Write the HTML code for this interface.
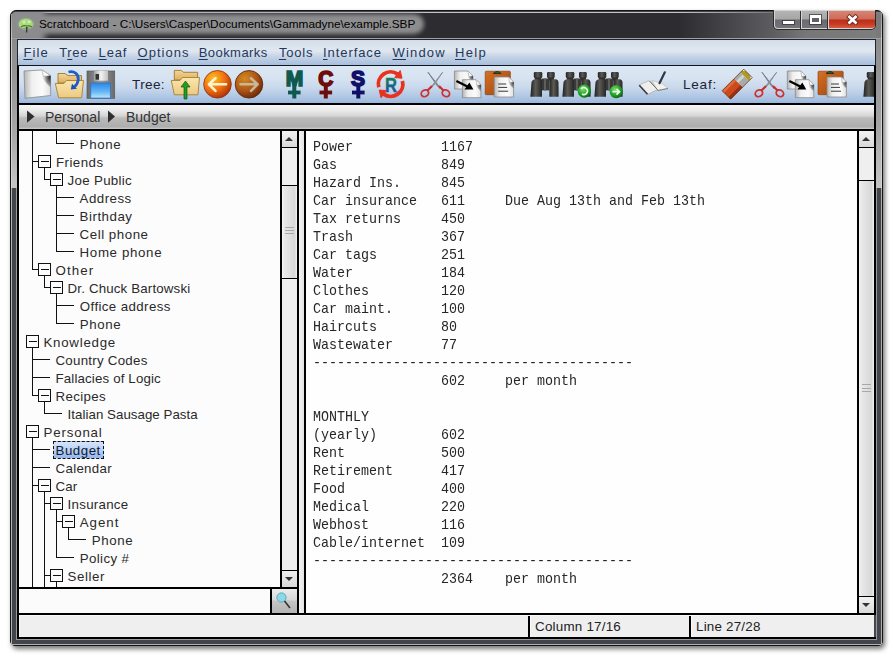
<!DOCTYPE html>
<html><head><meta charset="utf-8"><style>
*{box-sizing:border-box}
html,body{margin:0;padding:0}
body{width:894px;height:657px;background:#fff;position:relative;overflow:hidden;font-family:"Liberation Sans",sans-serif}
.a{position:absolute}
#shadow{left:8px;top:8px;width:881px;height:646px;border-radius:8px;box-shadow:2px 4px 7px rgba(0,0,0,.45)}
#win{left:10px;top:10px;width:873px;height:636px;background:#42454b;border:1px solid #141414;border-radius:6px 6px 5px 5px;overflow:hidden;box-shadow:2px 3px 5px rgba(0,0,0,.55)}
#inner-light{left:0;top:0;right:0;bottom:0;border:1px solid #b4b4b4;border-radius:6px 6px 4px 4px}
#title{left:1px;top:1px;width:869px;height:27px;background:#2d2d31;border-top:1px solid #c4c4c4;border-left:1px solid #b8b8b8;border-radius:5px 5px 0 0}
#sideL{left:1px;top:27px;width:5px;height:150px;background:linear-gradient(#8a8a8a,#a8a8a8 70%,#b8b8b8)}
#sideR{left:866px;top:27px;width:5px;height:150px;background:linear-gradient(#8a8a8a,#a8a8a8 70%,#b8b8b8)}
#menu{left:17px;top:39px;width:859px;height:27px;border-top:1px solid #1e2430;border-bottom:1px solid #10151f;border-left:1px solid #1e2430;border-right:1px solid #1e2430;
 background:linear-gradient(#d3dde9 0px,#dfe6ef 9px,#e1e7f0 11px,#c8d5e6 16px,#a6bedd 25px)}
#menu span{position:absolute;top:5px;font-size:13px;color:#1e395b}
#menu u{text-decoration:underline;text-decoration-thickness:1px;text-underline-offset:2px;text-decoration-skip-ink:none}
#tool{left:17px;top:66px;width:859px;height:37px;border-left:2px solid #000;border-right:2px solid #000;
 background:linear-gradient(#dce7f4 0px,#d8e3f1 12px,#c8d8ec 22px,#a6c0e0 34px,#9ab6dc 37px)}
#bc{left:17px;top:103px;width:859px;height:28px;border-top:2px solid #000;border-bottom:2px solid #000;border-left:2px solid #000;border-right:2px solid #000;
 background:linear-gradient(#f6f6f6 0px,#ececec 5px,#d4d4d4 11px,#bababa 13px,#adadad 22px,#d0d0d0 24px)}
.lbl{position:absolute;font-size:13.6px;color:#1c2438}
.blk{position:absolute;background:#000}
#treebg{left:19px;top:131px;width:261px;height:456px;background:#fcfcfc;overflow:hidden}
.sbtrack{position:absolute;background:#efefef}
.sbbtn{position:absolute;background:linear-gradient(#f2f2f2,#d9d9d9)}
.thumb{position:absolute;background:linear-gradient(90deg,#f6f6f6 0px,#e9e9e9 2px,#d6d6d6 13px,#ececec 14px)}
.grip{position:absolute;height:1px;width:9px;background:#a8a8a8}
.tri-up{position:absolute;width:0;height:0;border-left:4px solid transparent;border-right:4px solid transparent;border-bottom:4px solid #333}
.tri-dn{position:absolute;width:0;height:0;border-left:4px solid transparent;border-right:4px solid transparent;border-top:4px solid #333}
#editor{left:306px;top:131px;width:551px;height:482px;background:#fefefe;overflow:hidden}
#status{left:19px;top:615px;width:855px;height:22px;background:#efefef}
.st{position:absolute;font-size:13.4px;color:#222;top:4px}
.tl{position:absolute;background:#111}
.tt{position:absolute;font-size:13.3px;color:#2a2a2a;white-space:nowrap}
.box{position:absolute;width:13px;height:13px;border:1px solid #111;background:#fcfcfc}
.box::after{content:"";position:absolute;left:2px;top:5px;width:8px;height:1px;background:#111}
#ed pre{margin:0}
.ln{position:absolute;left:7px;font-family:"Liberation Mono",monospace;font-size:13.33px;color:#262626;white-space:pre;transform:scaleY(1.08);transform-origin:0 70%}
</style></head><body>
<div class="a" id="win"><div class="a" id="title"></div><div class="a" id="sideL"></div><div class="a" id="sideR"></div></div>
<div class="a" id="menu"><span style="left:5.4px;letter-spacing:1.1px"><u>F</u>ile</span><span style="left:41.3px;letter-spacing:0.6px">T<u>r</u>ee</span><span style="left:80.6px;letter-spacing:0.8px"><u>L</u>eaf</span><span style="left:119.5px;letter-spacing:1.05px"><u>O</u>ptions</span><span style="left:180.7px;letter-spacing:0.45px"><u>B</u>ookmarks</span><span style="left:260.9px;letter-spacing:0.8px"><u>T</u>ools</span><span style="left:305px;letter-spacing:0.92px"><u>I</u>nterface</span><span style="left:374.5px;letter-spacing:1.18px"><u>W</u>indow</span><span style="left:437px;letter-spacing:1.37px"><u>H</u>elp</span></div>
<div class="a" id="tool"><span class="lbl" style="left:113px;top:11px;letter-spacing:.35px">Tree:</span><span class="lbl" style="left:664px;top:11px;letter-spacing:.75px">Leaf:</span></div>
<div class="a" id="bc"></div>
<div class="a" style="left:11px;top:12px;width:865px;height:26px;overflow:hidden;border-radius:5px 0 0 0"><div class="a" style="left:-8px;top:1.8px;width:421px;height:20.5px;background:#8e8e90;border-radius:10px;filter:blur(2.2px)"></div><div class="a" style="left:-6px;top:-6px;width:40px;height:38px;background:#8c8c8e;filter:blur(3px)"></div></div>
<div class="a" style="left:680px;top:12px;width:202px;height:26px;background:linear-gradient(90deg,rgba(104,104,108,0),rgba(104,104,108,.8) 45%,#767678 62%,#7e7e7e)"></div>
<div class="a" style="left:39px;top:17px;font-size:11.8px;color:#000;white-space:nowrap">Scratchboard - C:\Users\Casper\Documents\Gammadyne\example.SBP</div>
<div class="a" style="left:773px;top:10px;width:103px;height:20px;background:#2a2a2a;border-radius:0 0 5px 5px"></div>
<div class="a" style="left:774px;top:10px;width:101px;height:19px;background:#d4d4d4;border-radius:0 0 4px 4px"></div>
<div class="a" style="left:775px;top:11px;width:25px;height:17px;border-radius:0 0 0 3px;background:linear-gradient(#b4b4b4,#a6a6a6 8px,#6a6a70 9px,#74747a)"></div>
<div class="a" style="left:800px;top:11px;width:1px;height:18px;background:#303030"></div>
<div class="a" style="left:802px;top:11px;width:25px;height:17px;background:linear-gradient(#b4b4b4,#a6a6a6 8px,#6a6a70 9px,#74747a)"></div>
<div class="a" style="left:827px;top:11px;width:1px;height:18px;background:#303030"></div>
<div class="a" style="left:829px;top:11px;width:46px;height:17px;border-radius:0 0 3px 0;background:linear-gradient(#d88474,#d06a58 8px,#b8301a 9px,#c83a22 13px,#d85a40)"></div>
<div class="a" style="left:783px;top:21px;width:11px;height:3px;background:#fff;outline:1px solid rgba(50,50,50,.7)"></div>
<div class="a" style="left:810px;top:15px;width:11px;height:9px;border:2px solid #fff;border-top-width:3px;background:#606066;outline:1px solid rgba(50,50,50,.7)"></div>
<svg class="a" style="left:846px;top:14px" width="13" height="11"><path d="M3.5 3L9.5 8.5M9.5 3L3.5 8.5" stroke="#6a2a20" stroke-width="4.6" stroke-linecap="square"/><path d="M3.5 3L9.5 8.5M9.5 3L3.5 8.5" stroke="#fff" stroke-width="2.8" stroke-linecap="square"/></svg>
<div class="a" style="left:876px;top:14px;width:6px;height:24px;background:#7a7a7a"></div>
<div class="a" style="left:11px;top:38px;width:871px;height:1px;background:#a0a0a0"></div>
<div class="a" style="left:11px;top:39px;width:6px;height:149px;background:linear-gradient(#8a8a8a,#a6a6a6 60%,#c4c4c4)"></div>
<div class="a" style="left:876px;top:39px;width:6px;height:149px;background:linear-gradient(#8a8a8a,#a6a6a6 60%,#c4c4c4)"></div>
<div class="a" style="left:11px;top:14px;width:1px;height:174px;background:linear-gradient(#9a9a9a,#c8c8c8 15%,#d4d4d4)"></div>
<div class="a" style="left:881px;top:14px;width:1px;height:174px;background:linear-gradient(#9a9a9a,#c8c8c8 15%,#d4d4d4)"></div>
<div class="a" style="left:11px;top:188px;width:1px;height:456px;background:#b0b0b0"></div>
<div class="a" style="left:16px;top:188px;width:1px;height:451px;background:#9a9a9a"></div>
<div class="a" style="left:876px;top:188px;width:1px;height:451px;background:#9a9a9a"></div>
<div class="a" style="left:881px;top:188px;width:1px;height:456px;background:#b0b0b0"></div>
<div class="a" style="left:16px;top:639px;width:861px;height:1px;background:#9a9a9a"></div>
<div class="a" style="left:12px;top:644px;width:869px;height:1px;background:#b0b0b0"></div>
<div class="a" style="left:45px;top:109px;font-size:14px;color:#333;white-space:nowrap">Personal</div>
<div class="a" style="left:126px;top:109px;font-size:14px;color:#333;white-space:nowrap">Budget</div>
<div class="a" id="treebg">
<div class="tl" style="left:13px;top:0px;width:1px;height:139px"></div>
<div class="tl" style="left:37px;top:0px;width:1px;height:13px"></div>
<div class="tl" style="left:25px;top:37px;width:1px;height:12px"></div>
<div class="tl" style="left:37px;top:55px;width:1px;height:66px"></div>
<div class="tl" style="left:25px;top:145px;width:1px;height:12px"></div>
<div class="tl" style="left:37px;top:163px;width:1px;height:30px"></div>
<div class="tl" style="left:13px;top:217px;width:1px;height:48px"></div>
<div class="tl" style="left:25px;top:271px;width:1px;height:12px"></div>
<div class="tl" style="left:13px;top:307px;width:1px;height:150px"></div>
<div class="tl" style="left:25px;top:361px;width:1px;height:96px"></div>
<div class="tl" style="left:37px;top:379px;width:1px;height:48px"></div>
<div class="tl" style="left:49px;top:397px;width:1px;height:12px"></div>
<div class="tl" style="left:37px;top:451px;width:1px;height:6px"></div>
<div class="tl" style="left:37px;top:12px;width:18px;height:1px"></div>
<div class="tt" style="left:60.80px;top:6px;letter-spacing:0.575px">Phone</div>
<div class="tl" style="left:13px;top:30px;width:6px;height:1px"></div>
<div class="box" style="left:19px;top:24px"></div>
<div class="tt" style="left:37.00px;top:24px;letter-spacing:0.450px">Friends</div>
<div class="tl" style="left:25px;top:48px;width:6px;height:1px"></div>
<div class="box" style="left:31px;top:42px"></div>
<div class="tt" style="left:48.60px;top:42px;letter-spacing:0.311px">Joe Public</div>
<div class="tl" style="left:37px;top:66px;width:18px;height:1px"></div>
<div class="tt" style="left:60.60px;top:60px;letter-spacing:0.483px">Address</div>
<div class="tl" style="left:37px;top:84px;width:18px;height:1px"></div>
<div class="tt" style="left:60.60px;top:78px;letter-spacing:0.514px">Birthday</div>
<div class="tl" style="left:37px;top:102px;width:18px;height:1px"></div>
<div class="tt" style="left:60.60px;top:96px;letter-spacing:0.533px">Cell phone</div>
<div class="tl" style="left:37px;top:120px;width:18px;height:1px"></div>
<div class="tt" style="left:60.60px;top:114px;letter-spacing:0.644px">Home phone</div>
<div class="tl" style="left:13px;top:138px;width:6px;height:1px"></div>
<div class="box" style="left:19px;top:132px"></div>
<div class="tt" style="left:36.50px;top:132px;letter-spacing:1.100px">Other</div>
<div class="tl" style="left:25px;top:156px;width:6px;height:1px"></div>
<div class="box" style="left:31px;top:150px"></div>
<div class="tt" style="left:48.60px;top:150px;letter-spacing:0.161px">Dr. Chuck Bartowski</div>
<div class="tl" style="left:37px;top:174px;width:18px;height:1px"></div>
<div class="tt" style="left:60.80px;top:168px;letter-spacing:0.392px">Office address</div>
<div class="tl" style="left:37px;top:192px;width:18px;height:1px"></div>
<div class="tt" style="left:60.80px;top:186px;letter-spacing:0.575px">Phone</div>
<div class="box" style="left:7px;top:204px"></div>
<div class="tt" style="left:24.50px;top:204px;letter-spacing:0.738px">Knowledge</div>
<div class="tl" style="left:13px;top:228px;width:18px;height:1px"></div>
<div class="tt" style="left:36.50px;top:222px;letter-spacing:0.258px">Country Codes</div>
<div class="tl" style="left:13px;top:246px;width:18px;height:1px"></div>
<div class="tt" style="left:36.50px;top:240px;letter-spacing:0.147px">Fallacies of Logic</div>
<div class="tl" style="left:13px;top:264px;width:6px;height:1px"></div>
<div class="box" style="left:19px;top:258px"></div>
<div class="tt" style="left:36.50px;top:258px;letter-spacing:0.333px">Recipes</div>
<div class="tl" style="left:25px;top:282px;width:18px;height:1px"></div>
<div class="tt" style="left:48.60px;top:276px;letter-spacing:0.035px">Italian Sausage Pasta</div>
<div class="box" style="left:7px;top:294px"></div>
<div class="tt" style="left:24.50px;top:294px;letter-spacing:0.829px">Personal</div>
<div class="tl" style="left:13px;top:318px;width:18px;height:1px"></div>
<div class="a" style="left:34px;top:310px;width:51px;height:18px;border:1px dashed #111;background:linear-gradient(#d6e5fb,#b4cdf4 55%,#95b6ec)"></div>
<div class="tt" style="left:36.50px;top:312px;letter-spacing:0.520px;color:#0e1a30">Budget</div>
<div class="tl" style="left:13px;top:336px;width:18px;height:1px"></div>
<div class="tt" style="left:36.50px;top:330px;letter-spacing:0.314px">Calendar</div>
<div class="tl" style="left:13px;top:354px;width:6px;height:1px"></div>
<div class="box" style="left:19px;top:348px"></div>
<div class="tt" style="left:36.50px;top:348px;letter-spacing:0.150px">Car</div>
<div class="tl" style="left:25px;top:372px;width:6px;height:1px"></div>
<div class="box" style="left:31px;top:366px"></div>
<div class="tt" style="left:48.60px;top:366px;letter-spacing:0.275px">Insurance</div>
<div class="tl" style="left:37px;top:390px;width:6px;height:1px"></div>
<div class="box" style="left:43px;top:384px"></div>
<div class="tt" style="left:60.80px;top:384px;letter-spacing:0.950px">Agent</div>
<div class="tl" style="left:49px;top:408px;width:18px;height:1px"></div>
<div class="tt" style="left:72.80px;top:402px;letter-spacing:0.625px">Phone</div>
<div class="tl" style="left:37px;top:426px;width:18px;height:1px"></div>
<div class="tt" style="left:60.80px;top:420px;letter-spacing:0.357px">Policy #</div>
<div class="tl" style="left:25px;top:444px;width:6px;height:1px"></div>
<div class="box" style="left:31px;top:438px"></div>
<div class="tt" style="left:48.60px;top:438px;letter-spacing:0.580px">Seller</div>
</div>
<div class="blk" style="left:17px;top:131px;width:2px;height:484px;background:#000"></div>
<div class="blk" style="left:280px;top:131px;width:2px;height:456px;background:#000"></div>
<div class="blk" style="left:297px;top:131px;width:2px;height:484px;background:#000"></div>
<div class="sbtrack" style="left:282px;top:131px;width:15px;height:456px"></div>
<div class="sbbtn" style="left:282px;top:131px;width:15px;height:16px"></div>
<div class="blk" style="left:282px;top:147px;width:15px;height:1px;background:#000"></div>
<div class="tri-up" style="left:285px;top:137px"></div>
<div class="blk" style="left:282px;top:185px;width:15px;height:1px;background:#000"></div>
<div class="thumb" style="left:282px;top:186px;width:15px;height:92px"></div>
<div class="blk" style="left:282px;top:278px;width:15px;height:1px;background:#000"></div>
<div class="grip" style="left:285px;top:227px"></div>
<div class="grip" style="left:285px;top:230px"></div>
<div class="grip" style="left:285px;top:233px"></div>
<div class="blk" style="left:282px;top:570px;width:15px;height:1px;background:#000"></div>
<div class="sbbtn" style="left:282px;top:571px;width:15px;height:16px"></div>
<div class="tri-dn" style="left:285px;top:577px"></div>
<div class="blk" style="left:19px;top:587px;width:280px;height:2px;background:#000"></div>
<div class="a" style="left:19px;top:589px;width:251px;height:24px;background:#fbfbfb"></div>
<div class="blk" style="left:270px;top:589px;width:2px;height:24px;background:#000"></div>
<div class="a" style="left:272px;top:589px;width:25px;height:24px;background:linear-gradient(#ececec,#d8d8d8 45%,#c4c4c4 50%,#b4b4b4)"></div>
<div class="a" style="left:299px;top:131px;width:5px;height:482px;background:linear-gradient(90deg,#f4f4f4,#e2e2e2)"></div>
<div class="blk" style="left:304px;top:131px;width:2px;height:484px;background:#000"></div>
<div class="a" id="editor">
<div class="ln" style="top:9px">Power           1167</div>
<div class="ln" style="top:27px">Gas             849</div>
<div class="ln" style="top:45px">Hazard Ins.     845</div>
<div class="ln" style="top:63px">Car insurance   611     Due Aug 13th and Feb 13th</div>
<div class="ln" style="top:81px">Tax returns     450</div>
<div class="ln" style="top:99px">Trash           367</div>
<div class="ln" style="top:117px">Car tags        251</div>
<div class="ln" style="top:135px">Water           184</div>
<div class="ln" style="top:153px">Clothes         120</div>
<div class="ln" style="top:171px">Car maint.      100</div>
<div class="ln" style="top:189px">Haircuts        80</div>
<div class="ln" style="top:207px">Wastewater      77</div>
<div class="ln" style="top:225px">----------------------------------------</div>
<div class="ln" style="top:243px">                602     per month</div>
<div class="ln" style="top:261px"></div>
<div class="ln" style="top:279px">MONTHLY</div>
<div class="ln" style="top:297px">(yearly)        602</div>
<div class="ln" style="top:315px">Rent            500</div>
<div class="ln" style="top:333px">Retirement      417</div>
<div class="ln" style="top:351px">Food            400</div>
<div class="ln" style="top:369px">Medical         220</div>
<div class="ln" style="top:387px">Webhost         116</div>
<div class="ln" style="top:405px">Cable/internet  109</div>
<div class="ln" style="top:423px">----------------------------------------</div>
<div class="ln" style="top:441px">                2364    per month</div>
</div>
<div class="blk" style="left:857px;top:131px;width:2px;height:482px;background:#000"></div>
<div class="sbtrack" style="left:859px;top:131px;width:15px;height:482px"></div>
<div class="sbbtn" style="left:859px;top:131px;width:15px;height:16px"></div>
<div class="blk" style="left:859px;top:147px;width:15px;height:1px;background:#000"></div>
<div class="tri-up" style="left:862px;top:137px"></div>
<div class="blk" style="left:859px;top:180px;width:15px;height:1px;background:#000"></div>
<div class="thumb" style="left:859px;top:181px;width:15px;height:415px"></div>
<div class="blk" style="left:859px;top:596px;width:15px;height:1px;background:#000"></div>
<div class="grip" style="left:862px;top:384px"></div>
<div class="grip" style="left:862px;top:388px"></div>
<div class="grip" style="left:862px;top:391px"></div>
<div class="sbbtn" style="left:859px;top:597px;width:15px;height:16px"></div>
<div class="tri-dn" style="left:862px;top:603px"></div>
<div class="blk" style="left:874px;top:131px;width:2px;height:484px;background:#000"></div>
<div class="blk" style="left:17px;top:613px;width:859px;height:2px;background:#000"></div>
<div class="a" id="status"></div>
<div class="blk" style="left:528px;top:615px;width:2px;height:22px;background:#000"></div>
<div class="blk" style="left:689px;top:615px;width:2px;height:22px;background:#000"></div>
<div class="blk" style="left:19px;top:615px;width:1px;height:22px;background:#fafafa"></div>
<div class="blk" style="left:530px;top:615px;width:1px;height:22px;background:#fafafa"></div>
<div class="blk" style="left:691px;top:615px;width:1px;height:22px;background:#fafafa"></div>
<div class="blk" style="left:19px;top:615px;width:855px;height:1px;background:#f8f8f8"></div>
<span class="st" style="left:535px;top:619px;letter-spacing:.22px">Column 17/16</span>
<span class="st" style="left:696px;top:619px;letter-spacing:.2px">Line 27/28</span>
<div class="blk" style="left:17px;top:615px;width:2px;height:24px;background:#000"></div>
<div class="blk" style="left:17px;top:637px;width:859px;height:2px;background:#000"></div>
<svg class="a" style="left:0;top:0" width="894" height="657"><defs><linearGradient id="paper" x1="0" y1="0" x2="1" y2="1"><stop offset="0" stop-color="#c8c8c8"/><stop offset=".35" stop-color="#f8f8f8"/><stop offset="1" stop-color="#e4e4e4"/></linearGradient><linearGradient id="paper2" x1="0" y1="0" x2="1" y2="0"><stop offset="0" stop-color="#b4b4b4"/><stop offset=".3" stop-color="#f0f0f0"/><stop offset=".7" stop-color="#fbfbfb"/><stop offset="1" stop-color="#e0e0e0"/></linearGradient><radialGradient id="foldsh" cx="1" cy=".35" r=".9"><stop offset="0" stop-color="#000" stop-opacity=".95"/><stop offset=".5" stop-color="#333" stop-opacity=".5"/><stop offset="1" stop-color="#fff" stop-opacity="0"/></radialGradient><linearGradient id="fold" x1="0" y1="0" x2="1" y2="1"><stop offset="0" stop-color="#fff"/><stop offset=".5" stop-color="#888"/><stop offset="1" stop-color="#111"/></linearGradient><linearGradient id="folder" x1="0" y1="0" x2="0" y2="1"><stop offset="0" stop-color="#fae6ae"/><stop offset="1" stop-color="#ecca80"/></linearGradient><linearGradient id="folderb" x1="0" y1="0" x2="0" y2="1"><stop offset="0" stop-color="#f4d698"/><stop offset="1" stop-color="#dcb060"/></linearGradient><linearGradient id="floppy" x1="0" y1="0" x2="1" y2="0"><stop offset="0" stop-color="#6a6a6a"/><stop offset=".5" stop-color="#9a9a9a"/><stop offset="1" stop-color="#6a6a6a"/></linearGradient><linearGradient id="label" x1="0" y1="0" x2="0" y2="1"><stop offset="0" stop-color="#2a88ea"/><stop offset=".6" stop-color="#6ab8f4"/><stop offset="1" stop-color="#b8eaff"/></linearGradient><linearGradient id="shutter" x1="0" y1="0" x2="1" y2="0"><stop offset="0" stop-color="#a0a0a0"/><stop offset=".5" stop-color="#f4f4f4"/><stop offset="1" stop-color="#c0c0c0"/></linearGradient><radialGradient id="orng" cx=".35" cy=".3" r=".75"><stop offset="0" stop-color="#ffc020"/><stop offset=".55" stop-color="#f07010"/><stop offset="1" stop-color="#a83008"/></radialGradient><radialGradient id="brwn" cx=".35" cy=".3" r=".75"><stop offset="0" stop-color="#d08a20"/><stop offset=".55" stop-color="#b05818"/><stop offset="1" stop-color="#6a2808"/></radialGradient><linearGradient id="bino" x1="0" y1="0" x2="1" y2="0"><stop offset="0" stop-color="#222220"/><stop offset=".45" stop-color="#5a5a56"/><stop offset="1" stop-color="#262624"/></linearGradient><radialGradient id="grn" cx=".4" cy=".35" r=".7"><stop offset="0" stop-color="#80e070"/><stop offset=".6" stop-color="#20a028"/><stop offset="1" stop-color="#0a6010"/></radialGradient><linearGradient id="clip" x1="0" y1="0" x2="1" y2="1"><stop offset="0" stop-color="#d87020"/><stop offset="1" stop-color="#9a4410"/></linearGradient><linearGradient id="rg" x1="0" y1="0" x2="0" y2="1"><stop offset="0" stop-color="#18904a"/><stop offset="1" stop-color="#1a48a8"/></linearGradient><radialGradient id="leaf" cx=".5" cy=".4" r=".6"><stop offset="0" stop-color="#d8f0a0"/><stop offset="1" stop-color="#78b040"/></radialGradient></defs><path d="M24 71L42 70L50.5 75.5L50.7 95.5L25 98.3Z" fill="url(#paper2)" stroke="#8a8a8a" stroke-width=".8"/><path d="M40 70.2L50.5 75.5L50.6 88L40 76Z" fill="url(#foldsh)"/><path d="M42 70L50.5 75.5L43.5 76.5Z" fill="#fafafa" stroke="#9a9a9a" stroke-width=".5"/><path d="M58 73.5H65L68 75.6H81.5V83H58Z" fill="url(#folderb)" stroke="#a07828" stroke-width=".9"/><path d="M55.3 83.5H64L66.5 80.5H83.5L81.6 97.8H58.6Z" fill="url(#folder)" stroke="#a88030" stroke-width=".9"/><path d="M68.5 72C74 70.5 78.8 74 78.3 79.5C77.9 83 76.3 85.3 74.5 86.8" fill="none" stroke="#1c5cd0" stroke-width="2.7"/><path d="M70.8 89.6L72 83.8L77 88.8Z" fill="#1a50c0"/><rect x="87" y="71" width="27.7" height="27.3" fill="url(#floppy)" stroke="#5a5a5a" stroke-width=".7"/><rect x="94" y="70.7" width="14" height="10" fill="url(#shutter)"/><rect x="95.5" y="74" width="3.5" height="5.7" fill="#333"/><rect x="90.8" y="83" width="19.5" height="15" fill="url(#label)" stroke="#2a70c8" stroke-width=".7"/><path d="M174.3 70.4H181.2L183.6 72.3H197.6V80H174.3Z" fill="url(#folderb)" stroke="#a07828" stroke-width=".9"/><path d="M171.3 80.5H180L182.5 77.5H199.5L197.9 94.8H174.3Z" fill="url(#folder)" stroke="#a88030" stroke-width=".9"/><path d="M185.5 81L190 87H187V99H184V87H181Z" fill="#20a020" stroke="#0a400a" stroke-width=".6"/><circle cx="217.5" cy="84.3" r="13.8" fill="url(#orng)" stroke="#8a3410" stroke-width=".8"/><path d="M226 84.3H209.5M215.5 78.3L209 84.3L215.5 90.8" fill="none" stroke="#fff4d0" stroke-width="2.6" stroke-linecap="round" stroke-linejoin="round"/><circle cx="249" cy="84.3" r="13.8" fill="url(#brwn)" stroke="#5a2408" stroke-width=".8"/><path d="M240.5 84.3H257M251 78.3L257.5 84.3L251 90.8" fill="none" stroke="#c8b898" stroke-width="2.6" stroke-linecap="round" stroke-linejoin="round"/><text x="285.8" y="86" font-family="Liberation Sans" font-weight="bold" font-size="22" fill="#0e5a50" stroke="#0e5a50" stroke-width="1.7" textLength="17.5" lengthAdjust="spacingAndGlyphs">M</text><rect x="292.3" y="84" width="4" height="14.5" fill="#0e5a50"/><rect x="288.0" y="90.6" width="12.6" height="3.8" fill="#0e5a50"/><text x="318.3" y="86" font-family="Liberation Sans" font-weight="bold" font-size="22" fill="#6e0c0c" stroke="#6e0c0c" stroke-width="1.7" textLength="15.0" lengthAdjust="spacingAndGlyphs">C</text><rect x="323.8" y="84" width="4" height="14.5" fill="#6e0c0c"/><rect x="319.5" y="90.6" width="12.6" height="3.8" fill="#6e0c0c"/><text x="351.1" y="86" font-family="Liberation Sans" font-weight="bold" font-size="22" fill="#10106a" stroke="#10106a" stroke-width="1.7" textLength="14.0" lengthAdjust="spacingAndGlyphs">S</text><rect x="356.3" y="84" width="4" height="14.5" fill="#10106a"/><rect x="352.0" y="90.6" width="12.6" height="3.8" fill="#10106a"/><path d="M378.8 87.3A12.2 12.2 0 0 1 397.6 74.1" fill="none" stroke="#e8321f" stroke-width="3.8"/><path d="M400.2 70.5L402 78.2L394.6 77.6Z" fill="#e8321f" stroke="#e8321f" stroke-width="1"/><path d="M402.4 80.9A12.2 12.2 0 0 1 383.6 94.1" fill="none" stroke="#e8321f" stroke-width="3.8"/><path d="M381 97.7L379.2 90.1L386.6 90.6Z" fill="#e8321f" stroke="#e8321f" stroke-width="1"/><text x="385" y="91.8" font-family="Liberation Sans" font-weight="bold" font-size="20.5" fill="url(#rg)" stroke="url(#rg)" stroke-width=".4" textLength="12" lengthAdjust="spacingAndGlyphs">R</text><path d="M428 72.3L437 85.5L440.5 89L438 85Z" fill="#7a8288" stroke="#7a8288" stroke-width="1"/><path d="M442.6 72.3L433.6 85.5L430 89L432.6 85Z" fill="#8a9298" stroke="#8a9298" stroke-width="1"/><ellipse cx="424.9" cy="93.3" rx="3.8" ry="3.2" transform="rotate(-30 424.9 93.3)" fill="none" stroke="#d03030" stroke-width="1.8"/><ellipse cx="445.9" cy="93.3" rx="3.8" ry="3.2" transform="rotate(30 445.9 93.3)" fill="none" stroke="#d03030" stroke-width="1.8"/><path d="M427.5 90.5L432 86M443.5 90.5L439 86" stroke="#c83030" stroke-width="2.2"/><path d="M762 72.3L771 85.5L774.5 89L772 85Z" fill="#7a8288" stroke="#7a8288" stroke-width="1"/><path d="M776.6 72.3L767.6 85.5L764 89L766.6 85Z" fill="#8a9298" stroke="#8a9298" stroke-width="1"/><ellipse cx="758.9" cy="93.3" rx="3.8" ry="3.2" transform="rotate(-30 758.9 93.3)" fill="none" stroke="#d03030" stroke-width="1.8"/><ellipse cx="779.9" cy="93.3" rx="3.8" ry="3.2" transform="rotate(30 779.9 93.3)" fill="none" stroke="#d03030" stroke-width="1.8"/><path d="M761.5 90.5L766 86M777.5 90.5L773 86" stroke="#c83030" stroke-width="2.2"/><path d="M454.4 71H467.9L472.9 76V89H454.4Z" fill="url(#paper2)" stroke="#8a8a8a" stroke-width=".8"/><path d="M466.4 71L472.9 76V83L466.4 76Z" fill="url(#foldsh)"/><path d="M467.9 71L472.9 76L468.9 76.5Z" fill="#fafafa" stroke="#9a9a9a" stroke-width=".5"/><path d="M462.4 79.7H475.9L480.9 84.7V97.7H462.4Z" fill="url(#paper2)" stroke="#8a8a8a" stroke-width=".8"/><path d="M474.4 79.7L480.9 84.7V91.7L474.4 84.7Z" fill="url(#foldsh)"/><path d="M475.9 79.7L480.9 84.7L476.9 85.2Z" fill="#fafafa" stroke="#9a9a9a" stroke-width=".5"/><path d="M456.4 81L470.4 88" stroke="#000" stroke-width="2.4"/><path d="M473.4 89.5L464.4 89.5L469.4 82.5Z" fill="#000"/><path d="M787.3 71H800.8L805.8 76V89H787.3Z" fill="url(#paper2)" stroke="#8a8a8a" stroke-width=".8"/><path d="M799.3 71L805.8 76V83L799.3 76Z" fill="url(#foldsh)"/><path d="M800.8 71L805.8 76L801.8 76.5Z" fill="#fafafa" stroke="#9a9a9a" stroke-width=".5"/><path d="M795.3 79.7H808.8L813.8 84.7V97.7H795.3Z" fill="url(#paper2)" stroke="#8a8a8a" stroke-width=".8"/><path d="M807.3 79.7L813.8 84.7V91.7L807.3 84.7Z" fill="url(#foldsh)"/><path d="M808.8 79.7L813.8 84.7L809.8 85.2Z" fill="#fafafa" stroke="#9a9a9a" stroke-width=".5"/><path d="M789.3 81L803.3 88" stroke="#000" stroke-width="2.4"/><path d="M806.3 89.5L797.3 89.5L802.3 82.5Z" fill="#000"/><rect x="485.2" y="71.2" width="25.2" height="23.5" rx="1" fill="url(#clip)" stroke="#7a3a10" stroke-width=".6"/><path d="M493.2 73.5Q497.2 69.5 501.2 73.5Z" fill="#2a6a20" stroke="#222" stroke-width=".8"/><path d="M494.2 77H508.6L513.6 82V97H494.2Z" fill="url(#paper2)" stroke="#8a8a8a" stroke-width=".8"/><path d="M507.1 77L513.6 82V89L507.1 82Z" fill="url(#foldsh)"/><path d="M508.6 77L513.6 82L509.6 82.5Z" fill="#fafafa" stroke="#9a9a9a" stroke-width=".5"/><rect x="498.2" y="83.5" width="8" height="1" fill="#3a3a3a"/><rect x="498.2" y="86.9" width="9" height="1" fill="#3a3a3a"/><rect x="498.2" y="90.7" width="10" height="1" fill="#3a3a3a"/><rect x="818" y="71.2" width="25.2" height="23.5" rx="1" fill="url(#clip)" stroke="#7a3a10" stroke-width=".6"/><path d="M826 73.5Q830 69.5 834 73.5Z" fill="#2a6a20" stroke="#222" stroke-width=".8"/><path d="M827 77H841.4L846.4 82V97H827Z" fill="url(#paper2)" stroke="#8a8a8a" stroke-width=".8"/><path d="M839.9 77L846.4 82V89L839.9 82Z" fill="url(#foldsh)"/><path d="M841.4 77L846.4 82L842.4 82.5Z" fill="#fafafa" stroke="#9a9a9a" stroke-width=".5"/><rect x="831" y="83.5" width="8" height="1" fill="#3a3a3a"/><rect x="831" y="86.9" width="9" height="1" fill="#3a3a3a"/><rect x="831" y="90.7" width="10" height="1" fill="#3a3a3a"/><rect x="533.8" y="72.1" width="8.5" height="5.8" rx="1.2" fill="url(#bino)"/><rect x="547" y="72.1" width="7.7" height="5.8" rx="1.2" fill="url(#bino)"/><rect x="534.8" y="77.5" width="6.5" height="3" fill="#2e2e2e"/><rect x="548" y="77.5" width="6" height="3" fill="#2e2e2e"/><path d="M531.5 82Q532.5 79.5 535 79.2H542V96.7H530.4Z" fill="url(#bino)"/><path d="M549.4 79.2H556Q558 79.5 558.5 82L558.6 96.7H549.4Z" fill="url(#bino)"/><rect x="541.9" y="78.5" width="7.5" height="11.9" fill="#3a3a38"/><rect x="544" y="78.5" width="2" height="11.9" fill="#5e5e5a"/><rect x="565.8" y="72.1" width="8.5" height="5.8" rx="1.2" fill="url(#bino)"/><rect x="579" y="72.1" width="7.7" height="5.8" rx="1.2" fill="url(#bino)"/><rect x="566.8" y="77.5" width="6.5" height="3" fill="#2e2e2e"/><rect x="580" y="77.5" width="6" height="3" fill="#2e2e2e"/><path d="M563.5 82Q564.5 79.5 567 79.2H574V96.7H562.4Z" fill="url(#bino)"/><path d="M581.4 79.2H588Q590 79.5 590.5 82L590.6 96.7H581.4Z" fill="url(#bino)"/><rect x="573.9" y="78.5" width="7.5" height="11.9" fill="#3a3a38"/><rect x="576" y="78.5" width="2" height="11.9" fill="#5e5e5a"/><rect x="597.8" y="72.1" width="8.5" height="5.8" rx="1.2" fill="url(#bino)"/><rect x="611" y="72.1" width="7.7" height="5.8" rx="1.2" fill="url(#bino)"/><rect x="598.8" y="77.5" width="6.5" height="3" fill="#2e2e2e"/><rect x="612" y="77.5" width="6" height="3" fill="#2e2e2e"/><path d="M595.5 82Q596.5 79.5 599 79.2H606V96.7H594.4Z" fill="url(#bino)"/><path d="M613.4 79.2H620Q622 79.5 622.5 82L622.6 96.7H613.4Z" fill="url(#bino)"/><rect x="605.9" y="78.5" width="7.5" height="11.9" fill="#3a3a38"/><rect x="608" y="78.5" width="2" height="11.9" fill="#5e5e5a"/><clipPath id="tbclip"><rect x="0" y="0" width="874" height="657"/></clipPath><g clip-path="url(#tbclip)"><rect x="866.8" y="72.1" width="8.5" height="5.8" rx="1.2" fill="url(#bino)"/><rect x="880" y="72.1" width="7.7" height="5.8" rx="1.2" fill="url(#bino)"/><rect x="867.8" y="77.5" width="6.5" height="3" fill="#2e2e2e"/><rect x="881" y="77.5" width="6" height="3" fill="#2e2e2e"/><path d="M864.5 82Q865.5 79.5 868 79.2H875V96.7H863.4Z" fill="url(#bino)"/><path d="M882.4 79.2H889Q891 79.5 891.5 82L891.6 96.7H882.4Z" fill="url(#bino)"/><rect x="874.9" y="78.5" width="7.5" height="11.9" fill="#3a3a38"/><rect x="877" y="78.5" width="2" height="11.9" fill="#5e5e5a"/></g><circle cx="584.3" cy="91.1" r="6.6" fill="url(#grn)"/><path d="M581 89A3.5 3.5 0 1 1 582 94" fill="none" stroke="#e8ffe0" stroke-width="1.6"/><circle cx="616.2" cy="91.7" r="6.6" fill="url(#grn)"/><path d="M612.5 91.7H619M616.5 88.8L619.5 91.7L616.5 94.6" fill="none" stroke="#e8ffe0" stroke-width="1.8"/><path d="M652 80.5L661.5 83L668 88.3L657.5 90.5Z" fill="#f2f1ec" stroke="#b0b0b0" stroke-width=".6"/><path d="M639 85L649 80.6L657.5 89.5L647.5 94.5Z" fill="#eeeeec" stroke="#a0a0a0" stroke-width=".6"/><path d="M639.3 85.2L647.5 94.3" stroke="#3a3a3a" stroke-width="1.6"/><path d="M649.5 81L657.5 89.8" stroke="#707070" stroke-width="1"/><path d="M657.5 90.6L668 88.5" stroke="#808080" stroke-width="1"/><path d="M664.8 72.3L659.5 83.2" stroke="#2e3848" stroke-width="2.2" stroke-linecap="round"/><g transform="translate(737 84.3) rotate(-45)"><rect x="-15" y="-6" width="17" height="12" fill="#cc4a1c"/><rect x="-15" y="-6" width="17" height="3" fill="#e06a3a"/><rect x="-15" y="3" width="17" height="3" fill="#9a3010"/><rect x="2" y="-6" width="9" height="12" fill="#a8aaa8"/><rect x="2" y="-3" width="9" height="3" fill="#d0d2d0"/><path d="M11 -6H13L15.5 -3V3L13 6H11Z" fill="#b09a20"/><rect x="-15" y="-6" width="30.5" height="12" fill="none" stroke="#5a3018" stroke-width=".7"/></g><path d="M27 110.5L34.5 116.5L27 122.7Z" fill="#2e2e2e"/><path d="M108 110.5L115 116.5L108 122.7Z" fill="#2e2e2e"/><circle cx="281.5" cy="597.5" r="4.6" fill="#8ad8e8" stroke="#5aaabb" stroke-width="1"/><path d="M284.5 601L290 608" stroke="#333" stroke-width="1.6"/><ellipse cx="26" cy="24" rx="8.5" ry="6.5" fill="#9ab488" opacity=".5"/><path d="M26.8 26L26.6 32.5" stroke="#3a3a3a" stroke-width="1.4"/><path d="M19 26Q18.5 20 23 19.5Q26 18 29 19.5Q33 20 32.8 25.5Q32 28.5 29 27.5Q27 26 25 27.5Q21 29 19 26Z" fill="#aada80"/><path d="M21 27Q24 25 27 26Q30 25.5 32 27" stroke="#4a7a2a" stroke-width="1.2" fill="none"/><circle cx="24" cy="22" r="1.5" fill="#d0f0b0"/><circle cx="29" cy="21.8" r="1.4" fill="#d0f0b0"/></svg>
</body></html>
